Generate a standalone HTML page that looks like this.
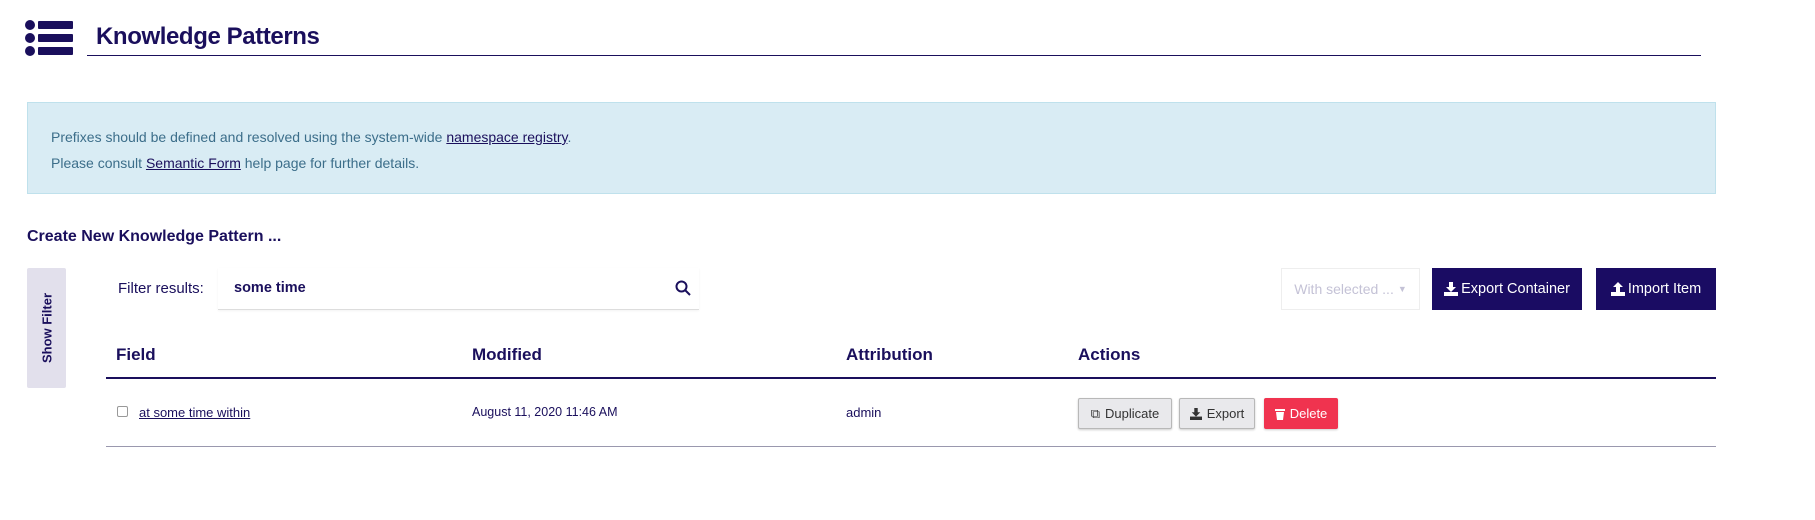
<!DOCTYPE html>
<html><head><meta charset="utf-8"><style>
*{box-sizing:border-box;margin:0;padding:0}
body{width:1815px;height:520px;background:#fff;font-family:"Liberation Sans",sans-serif;color:#1a0f5c;position:relative;overflow:hidden}
.abs{position:absolute}
.title{left:96px;top:23px;font-size:24px;font-weight:bold;letter-spacing:-0.4px}
.uline{left:87px;top:55px;width:1614px;height:1px;background:#1a0f5c}
.alert{left:27px;top:102px;width:1689px;height:92px;background:#d9ecf4;border:1px solid #bfe1ec;color:#3c6e8a;font-size:14px;padding:21px 0 0 23px;line-height:26px}
.alert a{color:#1a0f5c;text-decoration:underline}
.create{left:27px;top:228px;font-size:16px;font-weight:bold}
.tab{left:27px;top:268px;width:39px;height:120px;background:#e2e0ec;border-radius:2px}
.tab span{position:absolute;left:50%;top:50%;transform:translate(-50%,-50%) rotate(-90deg);font-size:13px;font-weight:bold;white-space:nowrap}
.lbl{left:118px;top:280px;font-size:15px}
.inp{left:218px;top:268px;width:481px;height:42px;border-bottom:1px solid #ddd;box-shadow:0 1px 2px rgba(0,0,0,.05)}
.q{left:234px;top:280px;font-size:14.5px;font-weight:bold}
.btn{height:42px;top:268px;font-size:14.5px;color:#fff;background:#1a0c63;display:flex;align-items:center;justify-content:center;gap:3px}
.sel{left:1281px;top:268px;width:139px;height:42px;border:1px solid #eee;color:#c4c2d6;font-size:14px;display:flex;align-items:center;justify-content:center}
.th{top:345px;font-size:17px;font-weight:bold}
.hl{left:106px;top:377px;width:1610px;height:2px;background:#1a0f5c}
.bl{left:106px;top:446px;width:1610px;height:1px;background:#9a98ae}
.td{top:405px;font-size:13px}
.sb{top:398px;height:31px;border:1px solid #b8b8b8;background:#e9e9ec;border-radius:2px;box-shadow:0 1px 2px rgba(0,0,0,.2);font-size:13px;color:#333;display:flex;align-items:center;justify-content:center;gap:5px}
</style></head><body>
<svg class="abs" style="left:25px;top:20px" width="48" height="36" viewBox="0 0 48 36" fill="#1a0f5c"><circle cx="5" cy="5" r="5"/><circle cx="5" cy="18" r="5"/><circle cx="5" cy="31" r="5"/><rect x="13" y="1" width="35" height="8" rx="1"/><rect x="13" y="14" width="35" height="8" rx="1"/><rect x="13" y="27" width="35" height="8" rx="1"/></svg>
<div class="abs title">Knowledge Patterns</div>
<div class="abs uline"></div>
<div class="abs alert">Prefixes should be defined and resolved using the system-wide <a>namespace registry</a>.<br>Please consult <a>Semantic Form</a> help page for further details.</div>
<div class="abs create">Create New Knowledge Pattern ...</div>
<div class="abs tab"><span>Show Filter</span></div>
<div class="abs lbl">Filter results:</div>
<div class="abs inp"></div>
<div class="abs q">some time</div>
<svg class="abs" style="left:675px;top:280px" width="16" height="16" viewBox="0 0 16 16" fill="none" stroke="#1a0f5c" stroke-width="2"><circle cx="6.5" cy="6.5" r="5"/><path d="M10.5 10.5L15 15"/></svg>
<div class="abs sel">With selected ... <span style="font-size:9px;margin-left:4px">▼</span></div>
<div class="abs btn" style="left:1432px;width:150px"><svg width="14" height="14" viewBox="0 0 14 14" fill="#fff"><path d="M5 0h4v5h3l-5 5-5-5h3z"/><rect x="0" y="10" width="14" height="4"/></svg>Export Container</div>
<div class="abs btn" style="left:1596px;width:120px"><svg width="14" height="14" viewBox="0 0 14 14" fill="#fff"><path d="M5 10h4V5h3L7 0 2 5h3z"/><rect x="0" y="10" width="14" height="4"/></svg>Import Item</div>
<div class="abs th" style="left:116px">Field</div>
<div class="abs th" style="left:472px">Modified</div>
<div class="abs th" style="left:846px">Attribution</div>
<div class="abs th" style="left:1078px">Actions</div>
<div class="abs hl"></div>
<div class="abs" style="left:117px;top:406px;width:11px;height:11px;border:1px solid #999;border-radius:2px"></div>
<div class="abs td" style="left:139px;text-decoration:underline">at some time within</div>
<div class="abs td" style="left:472px;font-size:12.5px">August 11, 2020 11:46 AM</div>
<div class="abs td" style="left:846px">admin</div>
<div class="abs sb" style="left:1078px;width:94px"><span>⧉</span>Duplicate</div>
<div class="abs sb" style="left:1179px;width:76px"><svg width="12" height="12" viewBox="0 0 14 14" fill="#333"><path d="M5 0h4v5h3l-5 5-5-5h3z"/><rect x="0" y="10" width="14" height="4"/></svg>Export</div>
<div class="abs sb" style="left:1264px;width:74px;background:#f0334f;border-color:#f0334f;color:#fff"><svg width="10" height="12" viewBox="0 0 10 12" fill="#fff"><rect x="0" y="1" width="10" height="2"/><path d="M1 4h8l-1 8H2z"/></svg>Delete</div>
<div class="abs bl"></div>
</body></html>
